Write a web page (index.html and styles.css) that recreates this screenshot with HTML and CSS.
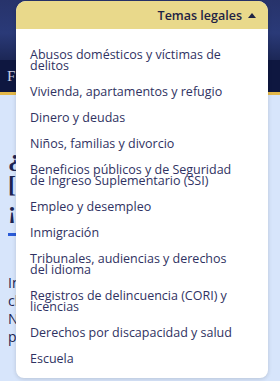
FILE: index.html
```html
<!doctype html>
<html lang="es">
<head>
	<meta charset="UTF-8">
	<title>Temas legales</title>
	<link rel="stylesheet" href="styles.css">
</head>
<body>
	<header class="site-header">
		<div class="header-top"></div>
		<div class="header-bar">
			<span class="brand">F</span>
		</div>
	</header>
	<main class="page">
		<h1 class="hero-title">¿Cómo<br>[podemos]<br>¡ayudarle!</h1>
		<div class="hero-rule"></div>
		<p class="hero-text">Información<br>clara<br>Nuestros<br>para usted</p>
	</main>

	<div class="topics">
		<button class="topics-toggle">Temas legales <span class="caret"></span></button>
		<ul class="topics-list">
			<li><a href="#">Abusos domésticos y víctimas de delitos</a></li>
			<li><a href="#">Vivienda, apartamentos y refugio</a></li>
			<li><a href="#">Dinero y deudas</a></li>
			<li><a href="#">Niños, familias y divorcio</a></li>
			<li><a href="#">Beneficios públicos y de Seguridad de Ingreso Suplementario (SSI)</a></li>
			<li><a href="#">Empleo y desempleo</a></li>
			<li><a href="#">Inmigración</a></li>
			<li><a href="#">Tribunales, audiencias y derechos del idioma</a></li>
			<li><a href="#">Registros de delincuencia (CORI) y licencias</a></li>
			<li><a href="#">Derechos por discapacidad y salud</a></li>
			<li><a href="#">Escuela</a></li>
		</ul>
	</div>
</body>
</html>
```

FILE: styles.css
```css
html, body {
	margin: 0;
	padding: 0;
}
body {
	width: 280px;
	height: 381px;
	overflow: hidden;
	background: #d7e5fb;
	font-family: "Open Sans", sans-serif;
}

.site-header .header-top {
	height: 60px;
	background: linear-gradient(180deg, #27336b 0%, #2a3a78 55%, #1c2756 100%);
}
.site-header .header-bar {
	height: 32px;
	background: #0e1740;
	border-bottom: 3px solid #e3b84a;
	display: flex;
	align-items: center;
	padding-left: 7px;
}
.brand {
	color: #c9cde0;
	font-family: "Liberation Serif", serif;
	font-size: 15px;
}

.page {
	padding: 50px 8px 0;
}
.hero-title {
	margin: 0;
	font-family: "Liberation Serif", serif;
	font-size: 24px;
	line-height: 26px;
	color: #1d2452;
}
.hero-rule {
	width: 30px;
	height: 3px;
	background: #2a5bd7;
	margin: 10px 0 38px;
}
.hero-text {
	margin: 0;
	font-size: 14px;
	line-height: 18px;
	color: #1d2452;
}

.topics {
	position: absolute;
	top: 1px;
	left: 16px;
	width: 252px;
	background: #fff;
	border-radius: 10px 10px 8px 8px;
	box-shadow: 0 1px 4px rgba(0, 0, 0, 0.15);
	overflow: hidden;
}
.topics-toggle {
	display: flex;
	align-items: center;
	justify-content: flex-end;
	gap: 6px;
	width: 100%;
	height: 28px;
	padding: 0 12px 0 0;
	border: 0;
	background: #e9d98b;
	color: #1f2344;
	font-family: inherit;
	font-size: 12.5px;
	font-weight: 600;
}
.caret {
	width: 0;
	height: 0;
	border-left: 4px solid transparent;
	border-right: 4px solid transparent;
	border-bottom: 5px solid #1f2344;
}
.topics-list {
	list-style: none;
	margin: 0;
	padding: 12px 0 7px;
}
.topics-list li a {
	display: block;
	padding: 7.5px 33px 7.5px 14px;
	font-size: 12.5px;
	line-height: 11px;
	color: #2f3262;
	text-decoration: none;
}
```
